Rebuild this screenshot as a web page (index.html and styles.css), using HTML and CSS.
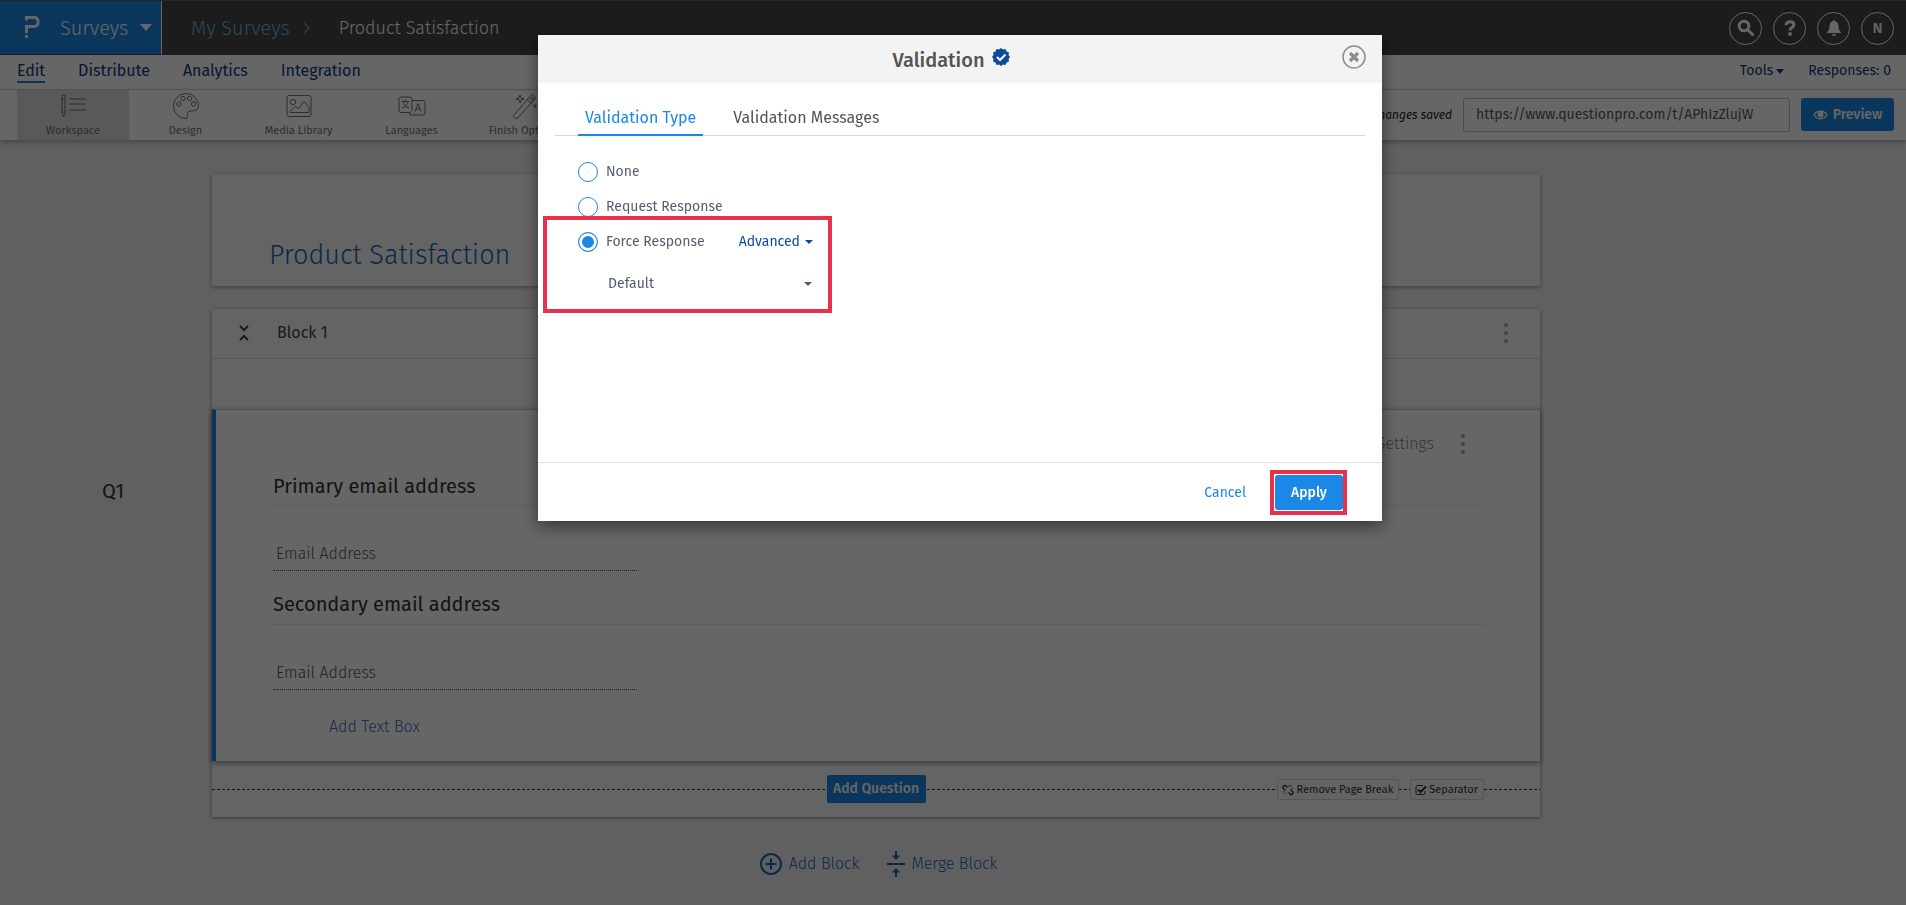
FILE: index.html
```html
<!DOCTYPE html>
<html lang="en">
<head>
<meta charset="utf-8">
<title>Product Satisfaction</title>
<link rel="stylesheet" href="styles.css">
</head>
<body>
<div class="page">
  <header class="topbar">
    <button class="product" type="button">
      <svg class="logo" width="16" height="23" viewBox="0 0 16 23"><path d="M2.500 4.500V1.500h8a3.500 3.500 0 0 1 3.500 3.500v2a3.500 3.500 0 0 1-3.500 3.500h-8V17" fill="none" stroke="currentColor" stroke-width="3"/><rect x="1" y="19" width="3" height="3" fill="currentColor"/></svg>
      <span>Surveys</span>
      <svg width="12" height="7" viewBox="0 0 12 7"><path d="M0 0h12L6 7z" fill="currentColor"/></svg>
    </button>
    <nav class="crumbs">
      <a class="crumb-link" href="#">My Surveys</a>
      <svg width="8" height="12" viewBox="0 0 8 12"><path d="M1 1l5 5-5 5" fill="none" stroke="currentColor" stroke-width="1.500"/></svg>
      <span class="crumb-current">Product Satisfaction</span>
    </nav>
    <div class="round-buttons">
      <button type="button" aria-label="Search"><svg width="18" height="18" viewBox="0 0 18 18"><circle cx="7" cy="7" r="4.800" fill="none" stroke="currentColor" stroke-width="3"/><path d="M10.500 10.500l5 5" stroke="currentColor" stroke-width="3" stroke-linecap="round"/></svg></button>
      <button type="button" aria-label="Help"><svg width="12" height="16" viewBox="0 0 12 16"><path d="M2 5C2.300 2.800 3.800 1.700 6 1.700c2.300 0 4 1.200 4 3.100C10 7.500 6 7 6 10.600" fill="none" stroke="currentColor" stroke-width="3"/><rect x="4.300" y="12.300" width="3.400" height="3.400" fill="currentColor"/></svg></button>
      <button type="button" aria-label="Notifications"><svg width="16" height="16" viewBox="0 0 16 16"><path d="M8 0a1 1 0 0 1 1 1.200c2.300.500 3.500 2.300 3.500 4.800 0 3.500 1 5 2.500 6v1H1v-1c1.500-1 2.500-2.500 2.500-6 0-2.500 1.200-4.300 3.500-4.800A1 1 0 0 1 8 0zM6 14h4a2 2 0 0 1-4 0z" fill="currentColor"/></svg></button>
      <button type="button">N</button>
    </div>
  </header>

  <div class="menubar">
    <nav class="menu">
      <a class="current" href="#">Edit</a>
      <a href="#">Distribute</a>
      <a href="#">Analytics</a>
      <a href="#">Integration</a>
    </nav>
    <div class="menu-side">
      <button type="button">Tools <svg width="8" height="5" viewBox="0 0 8 5"><path d="M0 0h8L4 5z" fill="currentColor"/></svg></button>
      <a href="#">Responses: 0</a>
    </div>
  </div>

  <div class="toolbar">
    <div class="tools">
      <button class="tool active" type="button">
        <svg width="28" height="28" viewBox="0 0 28 28"><path d="M3 3h3v18l-1.500 4L3 21zM3 7h3M3 20h3M10 7h17M10 12h17M10 18h17"/></svg>
        Workspace
      </button>
      <button class="tool" type="button">
        <svg width="28" height="28" viewBox="0 0 28 28"><path d="M14 1.500a12.500 12.500 0 1 0 0 25c4 0-1-5 2.500-7 3-1.500 10 1 10-5.500A12.500 12.500 0 0 0 14 1.500z"/><circle cx="7" cy="12" r="2.200"/><circle cx="11" cy="6.500" r="2.200"/><circle cx="17.500" cy="6.500" r="2.200"/><circle cx="21.500" cy="12" r="2.200"/></svg>
        Design
      </button>
      <button class="tool" type="button">
        <svg width="28" height="28" viewBox="0 0 28 28"><rect x="2" y="3.500" width="24" height="21" rx="2"/><circle cx="8" cy="10" r="2.700"/><path d="M4.500 20l6-6 3 3 5.500-8 5 6v5.500H5z"/></svg>
        Media Library
      </button>
      <button class="tool" type="button">
        <svg width="28" height="28" viewBox="0 0 28 28"><path d="M12 20.500H3a2 2 0 0 1-2-2V7a2 2 0 0 1 2-2h9a2 2 0 0 1 2 2v1.500h11a2 2 0 0 1 2 2V21a2 2 0 0 1-2 2H12v-2.500l2-2V8.500M4 9.500h7M7.500 7.500v2M10 9.500c-.500 3-3 5.500-6 6.500M5 9.500c.500 3 3 5.500 6 6.500M17 19.500l3-8 3 8M18 17h4"/></svg>
        Languages
      </button>
      <button class="tool" type="button">
        <svg width="28" height="28" viewBox="0 0 28 28"><path d="M2.500 23.500L20 3.500c2-2 5.500 1 4 3.500L6.500 26c-2 1.500-5-1-4-2.500zM16.500 8l4 3.500M19.500 7l2-2.500 1.500 1.500-2 2.500zM9 3l1 3 3 1-3 1-1 3-1-3-3-1 3-1zM24 12v4M22 14h4"/></svg>
        Finish Options
      </button>
    </div>
    <div class="share">
      <span class="saved">All changes saved</span>
      <input class="survey-url" type="text" aria-label="Survey link" value="https://www.questionpro.com/t/APhIzZlujW">
      <button class="preview" type="button"><svg width="15" height="10" viewBox="0 0 15 10"><path d="M1 5c3-5 10-5 13 0-3 5-10 5-13 0z" fill="none" stroke="currentColor" stroke-width="1.400"/><circle cx="7.500" cy="4.500" r="3" fill="currentColor"/></svg>Preview</button>
    </div>
  </div>

  <main class="canvas">
    <section class="card title-card"><h1>Product Satisfaction</h1></section>

    <span class="question-number">Q1</span>
    <section class="card block">
      <div class="block-head">
        <svg width="10" height="18" viewBox="0 0 10 18"><path d="M1 2l4 4 4-4M1 16l4-4 4 4" fill="none" stroke="currentColor" stroke-width="2"/></svg>
        <h2>Block 1</h2>
        <button class="dots" type="button" aria-label="Block menu"><i></i><i></i><i></i></button>
      </div>
      <div class="block-intro"></div>
      <article class="question">
        <div class="question-tools">
          <button class="settings" type="button">Settings</button>
          <button class="dots" type="button" aria-label="Question menu"><i></i><i></i><i></i></button>
        </div>
        <label class="field-title" for="primary">Primary email address</label>
        <input class="field" id="primary" type="text" placeholder="Email Address">
        <label class="field-title" for="secondary">Secondary email address</label>
        <input class="field" id="secondary" type="text" placeholder="Email Address">
        <a class="add-text" href="#">Add Text Box</a>
      </article>
      <div class="block-foot">
        <span class="dash"></span>
        <button class="add-question" type="button">Add Question</button>
        <div class="foot-side">
          <span class="dash"></span>
          <button class="mini" type="button"><svg width="12" height="12" viewBox="0 0 12 12"><path d="M5.500 3.500L4 2a1.600 1.600 0 0 0-2.500 2.500L3.500 6.500M6.500 8.500L8 10a1.600 1.600 0 0 0 2.500-2.500L8.500 5.500" fill="none" stroke="currentColor" stroke-width="1.300"/><path d="M7 1v2M9.500 1.500L8.500 3M11 4.500H9.500M1 8h1.500M3.500 10.500l1-1.500" fill="none" stroke="currentColor" stroke-width=".800"/></svg>Remove Page Break</button>
          <span class="dash short"></span>
          <button class="mini" type="button"><svg width="12" height="12" viewBox="0 0 12 12"><path d="M10 7v2a1.500 1.500 0 0 1-1.500 1.500h-6A1.500 1.500 0 0 1 1 9V3a1.500 1.500 0 0 1 1.500-1.500H8" fill="none" stroke="currentColor"/><path d="M3 5.500L5.500 8 11 2.500" fill="none" stroke="currentColor" stroke-width="2"/></svg>Separator</button>
          <span class="dash tail"></span>
        </div>
      </div>
    </section>

    <div class="block-actions">
      <a href="#"><svg width="24" height="24" viewBox="0 0 24 24"><circle cx="12" cy="12" r="10" fill="none" stroke="currentColor" stroke-width="2"/><path d="M12 6.500v11M6.500 12h11" stroke="currentColor" stroke-width="2"/></svg><span>Add Block</span></a>
      <a href="#"><svg width="18" height="26" viewBox="0 0 18 26"><path d="M0 13h18M9 0v5M9 21v5" stroke="currentColor" stroke-width="2"/><path d="M5 4.500h8L9 9zM5 21.500h8L9 17z" fill="currentColor"/></svg><span>Merge Block</span></a>
    </div>
  </main>
</div>

<div class="backdrop">
  <section class="modal" role="dialog" aria-modal="true" aria-labelledby="modal-title">
    <header class="modal-head">
      <h2 id="modal-title">Validation</h2>
      <svg class="badge" width="18" height="18" viewBox="0 0 18 18"><path d="M9 0l2 1.500L13.500 1l1 2.500L17 4.500 16.500 7 18 9l-1.500 2 .500 2.500-2.500 1-1 2.500-2.500-.500L9 18l-2-1.500-2.500.500-1-2.500-2.500-1L1.500 11 0 9l1.500-2L1 4.500l2.500-1 1-2.500 2.500.500z" fill="#0a4a9c"/><path d="M5 9l3 3 5.500-5.500" fill="none" stroke="#fff" stroke-width="2"/></svg>
      <button class="close" type="button" aria-label="Close"><svg width="24" height="24" viewBox="0 0 24 24"><circle cx="12" cy="12" r="11" fill="none" stroke="currentColor" stroke-width="1.500"/><path d="M8 8l8 8M16 8l-8 8" stroke="currentColor" stroke-width="3.200"/></svg></button>
    </header>
    <div class="tabs" role="tablist">
      <button class="tab selected" type="button" role="tab" aria-selected="true">Validation Type</button>
      <button class="tab" type="button" role="tab" aria-selected="false">Validation Messages</button>
    </div>
    <div class="options">
      <label class="option"><input type="radio" name="validation"><span>None</span></label>
      <label class="option"><input type="radio" name="validation"><span>Request Response</span></label>
      <div class="forced">
        <div class="forced-row">
          <label class="option"><input type="radio" name="validation" checked><span>Force Response</span></label>
          <button class="advanced" type="button">Advanced <svg width="8" height="4" viewBox="0 0 8 4"><path d="M0 0h8L4 4z" fill="currentColor"/></svg></button>
        </div>
        <div class="select-wrap">
          <select aria-label="Validation rule"><option>Default</option></select>
          <svg width="8" height="4" viewBox="0 0 8 4"><path d="M0 0h8L4 4z" fill="currentColor"/></svg>
        </div>
      </div>
    </div>
    <footer class="modal-foot">
      <button class="cancel" type="button">Cancel</button>
      <div class="highlight"><button class="apply" type="button">Apply</button></div>
    </footer>
  </section>
</div>
</body>
</html>
```

FILE: styles.css
```css
* { box-sizing: border-box; }

body {
  margin: 0;
  font: 14px/20px "Fira Sans", Roboto, "Noto Sans", sans-serif;
  color: #545e6b;
}

h1, h2 { margin: 0; font-weight: 400; }
a { color: inherit; text-decoration: none; }
svg { flex: none; display: block; }

button, input, select {
  font: inherit;
  color: inherit;
  background: none;
  border: 0;
  padding: 0;
  margin: 0;
}

.page {
  min-height: 100vh;
  background: #f1f1f1;
  overflow: hidden;
}

/* Top bar */
.topbar {
  display: flex;
  align-items: center;
  height: 55px;
  background: #464646;
  border-top: 1px solid #5c5c5c;
}
.product {
  display: flex;
  align-items: center;
  align-self: stretch;
  gap: 12px;
  width: 162px;
  padding-left: 24px;
  background: #1b87e6;
  border-right: 1px solid #fff;
  border-bottom: 1px solid #464646;
  color: #fff;
  font-size: 20px;
  font-weight: 300;
}
.product .logo { margin-right: 8px; }
.crumbs {
  display: flex;
  align-items: center;
  gap: 13px;
  padding-left: 29px;
  color: #8a8a8a;
}
.crumb-link { color: #6fb8dd; font-size: 20px; font-weight: 300; }
.crumb-current { padding-left: 15px; color: #fff; font-size: 18px; font-weight: 300; }
.round-buttons {
  display: flex;
  gap: 11px;
  margin-left: auto;
  padding-right: 12px;
}
.round-buttons button {
  display: grid;
  place-items: center;
  width: 33px;
  height: 33px;
  border: 1px solid #fff;
  border-radius: 50%;
  color: #fff;
  font-size: 15px;
  font-weight: 500;
}

/* Menu */
.menubar {
  display: flex;
  justify-content: space-between;
  height: 35px;
  padding: 6px 15px 0 17px;
  background: #fff;
  border-bottom: 1px solid #d8d8d8;
  color: #0b3b80;
}
.menu { display: flex; gap: 33px; font-size: 16px; }
.menu .current {
  align-self: flex-start;
  border-bottom: 2px solid #1b87c6;
}
.menu-side { display: flex; align-items: flex-start; gap: 24px; }
.menu-side button { display: flex; align-items: center; gap: 3px; }

/* Toolbar */
.toolbar {
  position: relative;
  display: flex;
  justify-content: space-between;
  height: 50px;
  padding: 0 12px 0 17px;
  background: #fff;
  box-shadow: 0 2px 5px rgba(0, 0, 0, .3);
}
.tools { display: flex; }
.tool {
  display: flex;
  flex-direction: column;
  align-items: center;
  gap: 3px;
  width: 113px;
  padding-top: 2px;
  font-size: 11px;
  line-height: 16px;
  color: #6c7480;
}
.tool svg { fill: none; stroke: currentColor; stroke-width: 1; }
.tool.active { width: 112px; background: #dedede; }
.share { display: flex; align-items: center; padding-bottom: 1px; }
.saved { padding-right: 11px; color: #1a1a1a; font-size: 12px; font-style: italic; }
.survey-url {
  width: 327px;
  height: 34px;
  padding: 0 12px;
  margin-right: 11px;
  border: 1px solid #bbb;
  border-radius: 2px;
}
.preview {
  display: flex;
  align-items: center;
  gap: 5px;
  height: 33px;
  width: 93px;
  justify-content: center;
  background: #1b87e6;
  border-radius: 3px;
  color: #fff;
  font-weight: 500;
}

/* Canvas */
.canvas {
  display: grid;
  grid-template-columns: 212px 1fr 366px;
  row-gap: 23px;
  padding-top: 34px;
}
.card {
  grid-column: 2;
  background: #fbfbfb;
  box-shadow: 0 1px 4px rgba(0, 0, 0, .4);
}
.title-card { padding: 61px 57px 11px; }
.title-card h1 {
  font-size: 27px;
  line-height: 40px;
  font-weight: 300;
  color: #1b65b8;
}
.question-number {
  grid-column: 1;
  padding: 170px 0 0 102px;
  font-size: 20px;
  line-height: 24px;
  color: #333;
}
.block-head {
  display: flex;
  align-items: center;
  height: 50px;
  padding: 0 27px 2px 27px;
  border-bottom: 1px solid #dcdcdc;
  color: #444;
}
.block-head h2 { flex: 1; padding-left: 28px; font-size: 16px; }
.block-intro { height: 50px; }
.dots {
  display: grid;
  gap: 4px;
  padding: 0 5px;
}
.dots i { width: 4px; height: 4px; border-radius: 50%; background: #a8a8a8; }
.question {
  display: flex;
  flex-direction: column;
  align-items: flex-start;
  height: 352px;
  padding: 20px 55px 20px 57px;
  background: #fff;
  border-top: 1px solid #ccc;
  border-left: 4px solid #1b87e6;
  box-shadow: 0 2px 6px rgba(0, 0, 0, .45);
}
.question-tools {
  display: flex;
  align-items: center;
  gap: 22px;
  align-self: flex-end;
  height: 28px;
  margin-right: 15px;
  color: #888;
  font-size: 16px;
  font-weight: 300;
}
.field-title {
  align-self: stretch;
  padding: 16px 0 7px;
  border-bottom: 1px solid #ebebeb;
  font-size: 20px;
  line-height: 24px;
  color: #333;
}
.field {
  width: 364px;
  height: 65px;
  padding: 30px 3px 0;
  border-bottom: 1px dotted #444;
  font-size: 16px;
  font-weight: 300;
}
.field + .field-title { padding: 21px 0 8px; }
.field::placeholder { color: #555; opacity: 1; }
.add-text {
  padding: 27px 0 0 56px;
  color: #3a6fc0;
  font-size: 16px;
  font-weight: 300;
}
.block-foot {
  display: grid;
  grid-template-columns: 1fr 99px 1fr;
  align-items: center;
  gap: 1px;
  height: 56px;
}
.dash { flex: 1; height: 1px; background: repeating-linear-gradient(90deg, #333 0 3px, transparent 3px 5px); }
.dash.short { flex: 0 0 11px; }
.dash.tail { flex: 0 0 56px; }
.add-question {
  height: 28px;
  padding-bottom: 1px;
  background: #1b87e6;
  border-radius: 2px;
  color: #fff;
  font-size: 14px;
  font-weight: 500;
}
.foot-side { display: flex; align-items: center; }
.mini {
  display: flex;
  align-items: center;
  gap: 2px;
  height: 21px;
  padding: 1px 5px 0 4px;
  border: 1px solid #d5d5d5;
  border-radius: 2px;
  color: #333;
  font-size: 11px;
}
.block-actions {
  grid-column: 2;
  display: flex;
  justify-content: center;
  gap: 28px;
  padding: 11px 0 0 4px;
  color: #1b65b8;
  font-size: 16px;
  font-weight: 300;
}
.block-actions a { display: flex; align-items: center; gap: 6px; }

/* Dialog */
.backdrop {
  position: fixed;
  inset: 0;
  padding-top: 35px;
  padding-right: 524px;
  padding-left: 538px;
  background: rgba(0, 0, 0, .6);
}
.modal {
  background: #fff;
  box-shadow: 0 5px 15px rgba(0, 0, 0, .5);
}
.modal-head {
  position: relative;
  display: flex;
  justify-content: center;
  gap: 7px;
  height: 48px;
  padding: 13px 18px 0 0;
  margin-bottom: 24px;
  background: #f3f3f3;
  color: #545454;
}
.modal-head h2 { font-size: 20px; line-height: 24px; font-weight: 500; }
.close {
  position: absolute;
  top: 10px;
  right: 16px;
  color: #8d8d8d;
}
.tabs {
  display: flex;
  gap: 23px;
  margin: 0 17px;
  padding-left: 23px;
  border-bottom: 1px solid #d9d9d9;
}
.tab {
  height: 29px;
  padding: 0 7px 8px;
  margin-bottom: -1px;
  font-size: 16px;
  line-height: 20px;
  color: #545454;
}
.tab.selected { padding-bottom: 6px; border-bottom: 2px solid #1b87e6; color: #1b87e6; }
.options {
  display: flex;
  flex-direction: column;
  align-items: flex-start;
  gap: 15px;
  min-height: 326px;
  padding: 26px 40px 0;
}
.option { display: flex; align-items: center; gap: 8px; }
.option input {
  appearance: none;
  width: 20px;
  height: 20px;
  border: 1px solid #1b87e6;
  border-radius: 50%;
}
.option span { padding-bottom: 1px; line-height: 19px; }
.option input:checked {
  background: #1b87e6;
  box-shadow: inset 0 0 0 3px #fff;
}
.forced {
  position: relative;
  width: 235px;
}
.forced::after {
  content: "";
  position: absolute;
  inset: -16px -19px -16px -35px;
  border: 4px solid #e83150;
  pointer-events: none;
}
.forced-row { display: flex; justify-content: space-between; }
.advanced { display: flex; align-items: center; gap: 5px; color: #0a4a9c; }
.select-wrap {
  display: flex;
  align-items: center;
  margin-top: 22px;
  padding: 0 1px 3px 30px;
}
.select-wrap select { flex: 1; appearance: none; height: 20px; }
.modal-foot {
  display: flex;
  justify-content: flex-end;
  align-items: center;
  gap: 24px;
  height: 59px;
  padding: 1px 35px 0 0;
  border-top: 1px solid #e3e3e3;
}
.cancel { color: #1b87e6; }
.highlight { padding: 1px 0 1px 1px; border: 4px solid #e83150; }
.apply {
  display: block;
  width: 68px;
  height: 35px;
  background: #1b87e6;
  border-radius: 3px;
  color: #fff;
  font-weight: 500;
}
```
